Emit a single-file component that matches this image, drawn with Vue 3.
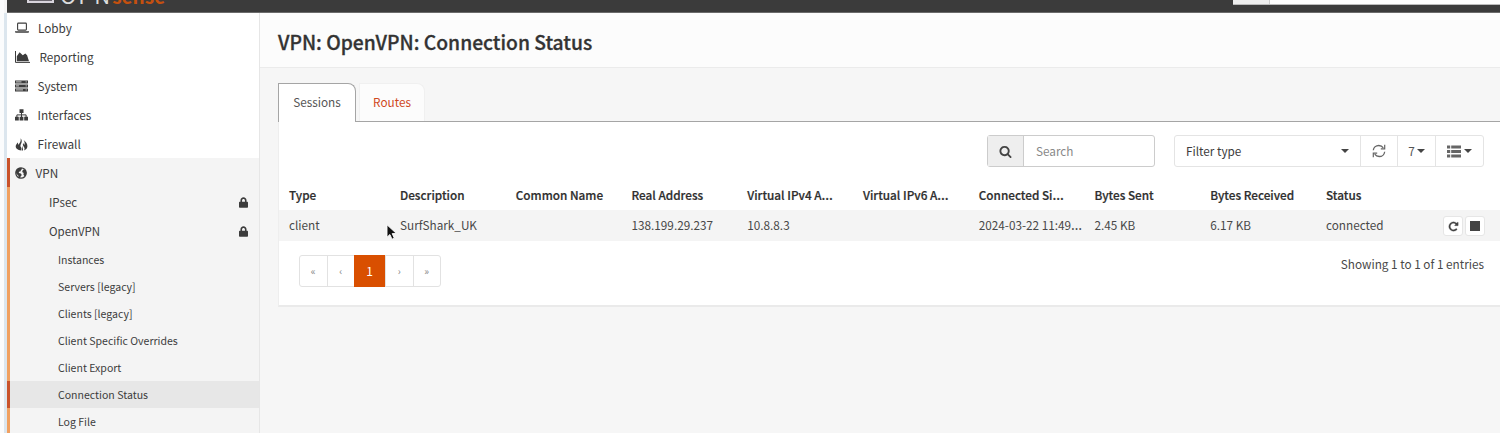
<script setup>
const mainMenu = [
  { icon: 'laptop', label: 'Lobby', x: 31 },
  { icon: 'chart', label: 'Reporting', x: 32.4 },
  { icon: 'server', label: 'System', x: 30.500 },
  { icon: 'sitemap', label: 'Interfaces', x: 30.500 },
  { icon: 'fire', label: 'Firewall', x: 30.500 },
  { icon: 'globe', label: 'VPN', x: 28.500, active: true },
]
const groups = ['IPsec', 'OpenVPN']
const pages = [
  'Instances',
  'Servers [legacy]',
  'Clients [legacy]',
  'Client Specific Overrides',
  'Client Export',
  'Connection Status',
  'Log File',
]
const columns = [
  { label: 'Type', value: 'client' },
  { label: 'Description', value: 'SurfShark_UK' },
  { label: 'Common Name', value: '' },
  { label: 'Real Address', value: '138.199.29.237' },
  { label: 'Virtual IPv4 A', cutLabel: true, value: '10.8.8.3' },
  { label: 'Virtual IPv6 A', cutLabel: true, value: '' },
  { label: 'Connected Si', cutLabel: true, value: '2024-03-22 11:49', cutValue: true },
  { label: 'Bytes Sent', value: '2.45 KB' },
  { label: 'Bytes Received', value: '6.17 KB' },
  { label: 'Status', value: 'connected' },
]
</script>

<template>
  <div class="app">
    <header class="topbar">
      <div class="brand">
        <span class="brand-box"></span>
        <span class="brand-name">OPN<b>sense</b></span>
      </div>
      <div class="top-search"><span></span></div>
    </header>

    <div class="body">
      <nav class="sidebar">
        <a v-for="m in mainMenu" :key="m.label" class="item" :class="{ active: m.active }">
          <span class="item-icon" :style="{ width: m.x - 8 + 'px' }">
            <svg v-if="m.icon === 'laptop'" width="14" height="12" viewBox="0 0 14 12">
              <rect x="2.6" y="1.1" width="8.8" height="7" rx="0.8" fill="none" stroke="currentColor" stroke-width="1.1" />
              <path d="M0 9.3h14v.7q0 .8-1 .8H1q-1 0-1-.8z" fill="currentColor" />
            </svg>
            <svg v-else-if="m.icon === 'chart'" width="15" height="12" viewBox="0 0 15 12">
              <path d="M.5 0v11.4H15" fill="none" stroke="currentColor" stroke-width="1" />
              <path d="M1.800 10.200V5.200L4.600 1.300l3.200 3L10.300 2.500l1.800 1.700 1.900 6z" fill="currentColor" />
            </svg>
            <svg v-else-if="m.icon === 'server'" width="13" height="12" viewBox="0 0 13 12">
              <path d="M0 .4h13v3H0zM0 4.400h13v3H0zM0 8.400h13v3H0z" fill="currentColor" />
              <path d="M1 1.900h5.500M1 5.900h3M1 9.900h7M10.600 1.900h1.200M10.600 5.900h1.200M10.600 9.900h1.200" stroke="#ddd" stroke-width=".9" />
            </svg>
            <svg v-else-if="m.icon === 'sitemap'" width="13" height="12" viewBox="0 0 13 12">
              <path d="M4.500.2h4v3.900h-4zM0 7.700h3.800v3.800H0zM4.600 7.700h3.800v3.800H4.600zM9.200 7.700H13v3.800H9.200z" fill="currentColor" />
              <path d="M6.500 3.500V8M1.900 8V5.900h9.200V8" fill="none" stroke="currentColor" stroke-width="1" />
            </svg>
            <svg v-else-if="m.icon === 'fire'" width="13" height="13" viewBox="0 0 13 13">
              <path d="M5.600.3c1.700 1.900 1.300 3.800.5 5.400-.8 1.500-.9 2.700.1 3.900.5.900.4 1.900 0 2.800C2.800 12.300.6 10.600.7 8.100c.1-1.600 1.300-2.400 1.800-3.700.7.700.8 1.600.5 2.500C5 5.400 6.200 3.300 5.600.3z" fill="currentColor" />
              <path d="M8.600 1.900c2.400 1.700 4.100 4 3.800 6.600-.2 2-1.500 3.400-3.400 3.900.8-1.600.7-2.500-.1-3.500-.8-1.100-1.400-2.300-.8-3.900.4.800.8 1.400 1.300 1.900.5-1.600.4-3.400-.8-5z" fill="currentColor" />
              <path d="M7.100 7.700c.8 1.500 1.200 3.100.8 4.800H6.700c.7-1.600.6-3.200.4-4.800z" fill="currentColor" />
            </svg>
            <svg v-else width="12" height="12" viewBox="0 0 12 12">
              <circle cx="6" cy="6" r="5.200" fill="none" stroke="currentColor" stroke-width="1.300" />
              <path d="M1.500 2.800L4 .8l2.500.2.700 1-1.300 1-.2 1.200-1.700.6-.2 1.300 2 .4 1 1.500-1.200 1.600-.6 1.700-1.300-.4-.4-2.500-1.900-1.600-.6-2zM8.500 2.500l2 .6.900 2.400-.5 2.300-1.400 1.400-1.100-1.800.3-1.300-1.500-1.200.5-1.600z" fill="currentColor" />
            </svg>
          </span>
          <span>{{ m.label }}</span>
        </a>
        <div class="submenu">
          <a v-for="g in groups" :key="g" class="group">
            <span>{{ g }}</span>
            <svg width="9" height="11" viewBox="0 0 448 512">
              <path fill="currentColor" d="M400 224h-24v-72C376 68.200 307.800 0 224 0S72 68.200 72 152v72H48c-26.500 0-48 21.500-48 48v192c0 26.500 21.500 48 48 48h352c26.500 0 48-21.500 48-48V272c0-26.500-21.500-48-48-48zm-104 0H152v-72c0-39.700 32.300-72 72-72s72 32.300 72 72v72z" />
            </svg>
          </a>
          <a v-for="p in pages" :key="p" class="page" :class="{ current: p === 'Connection Status' }">{{ p }}</a>
        </div>
      </nav>

      <main class="main">
        <div class="title"><h1>VPN: OpenVPN: Connection Status</h1></div>
        <div class="tabs">
          <a class="tab selected">Sessions</a>
          <a class="tab">Routes</a>
        </div>
        <section class="panel">
          <div class="toolbar">
            <div class="search">
              <span class="search-icon">
                <svg width="13" height="13" viewBox="0 0 1792 1792">
                  <path fill="currentColor" d="M1216 832q0-185-131.500-316.500t-316.500-131.500-316.500 131.500-131.500 316.500 131.500 316.500 316.500 131.500 316.500-131.500 131.500-316.500zm512 832q0 52-38 90t-90 38q-54 0-90-38l-343-342q-179 124-399 124-143 0-273.500-55.500t-225-150-150-225-55.500-273.500 55.500-273.500 150-225 225-150 273.500-55.500 273.500 55.500 225 150 150 225 55.500 273.500q0 220-124 399l343 343q37 37 37 90z" />
                </svg>
              </span>
              <span class="search-text">Search</span>
            </div>
            <div class="actions">
              <div class="filter"><span>Filter type</span><i class="caret"></i></div>
              <div class="btn refresh">
                <svg width="14" height="14" viewBox="0 0 14 14" fill="none" stroke="currentColor" stroke-width="1.300">
                  <path d="M1.300 6.300C1.600 3.500 4 1.500 6.800 1.500c1.900 0 3.500.9 4.500 2.300M12.700 7.700c-.3 2.800-2.700 4.800-5.500 4.800-1.900 0-3.500-.9-4.500-2.300" />
                  <path d="M12.700.8v4H8.800M1.300 13.200v-4h3.900" stroke-width="1.200" />
                </svg>
              </div>
              <div class="btn count"><span>7</span><i class="caret wide"></i></div>
              <div class="btn list">
                <svg width="14" height="13" viewBox="0 0 14 13" fill="currentColor">
                  <path d="M0 .4h3.200v3.200H0zM0 4.900h3.200v3.200H0zM0 9.400h3.200v3.200H0zM4.200.4H14v3.200H4.200zM4.200 4.900H14v3.200H4.200zM4.200 9.400H14v3.200H4.200z" />
                </svg>
                <i class="caret wide"></i>
              </div>
            </div>
          </div>

          <div class="grid head">
            <span v-for="c in columns" :key="c.label">{{ c.label }}<i v-if="c.cutLabel" class="dots">…</i></span>
          </div>
          <div class="grid data">
            <span v-for="c in columns" :key="c.label">{{ c.value }}<i v-if="c.cutValue" class="dots">…</i></span>
            <div class="row-actions">
              <button>
                <svg width="11" height="11" viewBox="0 0 1792 1792">
                  <path fill="currentColor" stroke="currentColor" stroke-width="40" d="M1664 256v448q0 26-19 45t-45 19h-448q-42 0-59-40-17-39 14-69l138-138q-148-137-349-137-104 0-198.500 40.500t-163.500 109.500-109.500 163.500-40.500 198.500 40.500 198.500 109.500 163.500 163.500 109.500 198.500 40.500q119 0 225-52t179-147q7-10 23-12 15 0 25 9l137 138q9 8 9.500 20.500t-7.500 22.500q-109 132-264 204.500t-327 72.500q-156 0-298-61t-245-164-164-245-61-298 61-298 164-245 245-164 298-61q147 0 284.500 55.500t244.500 156.500l130-129q29-31 70-14 39 17 39 59z" />
                </svg>
              </button>
              <button><i class="stop"></i></button>
            </div>
            <svg class="cursor" width="12" height="17" viewBox="0 0 12 17">
              <path d="M1 .8v12.400l2.900-2.700 2.100 4.700 2.300-1-2.100-4.600 4.200-.1z" fill="#111" stroke="#fff" stroke-width=".9" />
            </svg>
          </div>

          <footer class="foot">
            <div class="pager">
              <span>«</span><span>‹</span><span class="on">1</span><span>›</span><span>»</span>
            </div>
            <div class="summary">Showing 1 to 1 of 1 entries</div>
          </footer>
        </section>
      </main>
    </div>
  </div>
</template>

<style>
html, body { margin: 0; overflow: hidden; }
</style>

<style scoped>
.app {
  width: 1500px;
  height: 433px;
  overflow: hidden;
  display: flex;
  flex-direction: column;
  background: #f6f6f6;
  color: #3c3c3c;
  font: 11.750px/18px "Noto Sans CJK SC", "Source Sans Pro", sans-serif;
  box-sizing: border-box;
  border-left: 4px solid #fbfcfd;
}
.app *, .app *::before { box-sizing: border-box; }
.topbar {
  flex: none;
  height: 13px;
  margin-left: 3px;
  background: #3b3b3b;
  border-bottom: 1px solid #6b6b6b;
  display: flex;
  justify-content: space-between;
  overflow: hidden;
}
.brand { display: flex; align-items: flex-end; height: 3px; margin-left: 20px; }
.brand-box { width: 27px; height: 14px; border: 2px solid #d8d4dc; background: #6a666e; }
.brand-name { margin-left: 6px; font-size: 22px; line-height: 20px; letter-spacing: 2px; height: 16px; margin-bottom: 3px; color: #ddd; }
.brand-name b { color: #c4500f; font-size: 19px; letter-spacing: 0; }
.top-search { width: 267px; height: 5px; background: #fdfdfd; border-bottom: 1px solid #bbb; }
.top-search span { display: block; width: 37px; height: 4px; background: #eee; border-right: 1px solid #ccc; }
.body { flex: 1; display: flex; min-height: 0; }
.sidebar {
  flex: none;
  width: 256px;
  border-left: 3px solid #dce6ee;
  border-right: 1px solid #e6e6e6;
  background: #fff;
  padding-top: 1px;
}
.item { display: flex; align-items: center; height: 28.900px; padding-left: 8px; }
.item-icon { display: flex; align-items: center; flex: none; }
.item.active { background: #f4f4f4; border-left: 3px solid #c9532b; padding-left: 5px; height: 29px; }
.submenu { background: #f4f4f4; border-left: 3px solid #f0a060; height: 260px; }
.group { display: flex; align-items: center; justify-content: space-between; height: 29.200px; padding: 0 11px 0 39px; font-size: 11.500px; }
.page { display: block; height: 27.100px; line-height: 27px; padding-left: 48px; font-size: 10.550px; }
.page.current { background: #e7e7e7; margin-left: -3px; border-left: 3px solid #c9532b; }
.main { flex: 1; min-width: 0; }
.title { height: 55px; background: #fcfcfc; border-bottom: 1px solid #ebebeb; padding: 16px 0 0 18px; }
h1 { margin: 0; font-size: 19.300px; line-height: 26px; font-weight: 500; -webkit-text-stroke: .3px; color: #333; }
.tabs { display: flex; gap: 3px; margin-left: 18px; padding-top: 15px; height: 54px; border-bottom: 1px solid #a5a5a5; }
.tab { height: 38px; line-height: 35px; border: 1px solid #f0f0f0; border-bottom: 0; background: #fcfcfc; border-radius: 0 8px 0 0; color: #d0491c; width: 66px; text-align: center; }
.tab.selected { width: 78px; height: 39px; background: #fff; border-color: #a5a5a5; color: #555; }
.panel { margin-left: 18px; height: 185px; background: #fff; border-bottom: 2px solid #eaeaea; border-left: 1px solid #eee; display: flex; flex-direction: column; }
.toolbar { display: flex; justify-content: flex-end; gap: 19px; padding: 13px 16px 0 0; height: 58px; }
.search { display: flex; width: 168px; height: 32px; border: 1px solid #ccc; border-radius: 3px; align-items: stretch; }
.search-icon { width: 36px; background: #eee; border-right: 1px solid #ccc; display: flex; align-items: center; justify-content: center; color: #444; }
.search-text { line-height: 30px; padding-left: 12px; color: #888; }
.actions { display: flex; width: 310px; height: 32px; border: 1px solid #e4e4e4; border-radius: 3px; }
.filter { width: 185px; padding: 0 11px 0 11px; display: flex; align-items: center; justify-content: space-between; }
.btn { border-left: 1px solid #e4e4e4; display: flex; align-items: center; justify-content: center; gap: 2px; color: #555; }
.refresh { width: 37px; color: #666; }
.count { width: 38px; }
.list { flex: 1; gap: 3px; color: #666; padding-right: 1px; }
.caret { width: 0; height: 0; border: 4px solid transparent; border-top: 4px solid #444; border-bottom: 0; }
.caret.wide { border-width: 4px 4px 0; }
.grid { display: grid; grid-template-columns: 111px repeat(9, 115.750px) 1fr; padding-left: 10px; white-space: nowrap; position: relative; align-items: center; }
.head { height: 30px; font-weight: 500; -webkit-text-stroke: .2px; color: #2e2e2e; }
.data { height: 31px; background: #f4f4f4; color: #484848; padding-bottom: 2px; }
.dots { font-family: "Noto Sans", sans-serif; font-style: normal; font-size: 14px; line-height: 1; }
.row-actions { display: flex; gap: 2px; justify-content: flex-end; padding: 3px 15px 0 0; }
button { width: 20px; height: 20px; padding: 0; background: #fff; border: 1px solid #e6e6e6; border-radius: 3px; color: #444; display: flex; align-items: center; justify-content: center; }
.stop { width: 10px; height: 10px; background: #444; }
.cursor { position: absolute; left: 107px; top: 14px; }
.foot { display: flex; justify-content: space-between; padding: 14px 16px 0 20px; }
.pager { display: flex; width: 142px; height: 32px; border: 1px solid #e2e2e2; border-radius: 3px; font-size: 10px; color: #888; }
.pager span { flex: 1; display: flex; align-items: center; justify-content: center; border-left: 1px solid #e2e2e2; }
.pager span:first-child { border-left: 0; }
.pager .on { flex: none; width: 31px; height: 32px; margin-top: -1px; background: #d94f00; color: #fff; font-size: 12px; border: 0; }
.summary { color: #484848; }
</style>
